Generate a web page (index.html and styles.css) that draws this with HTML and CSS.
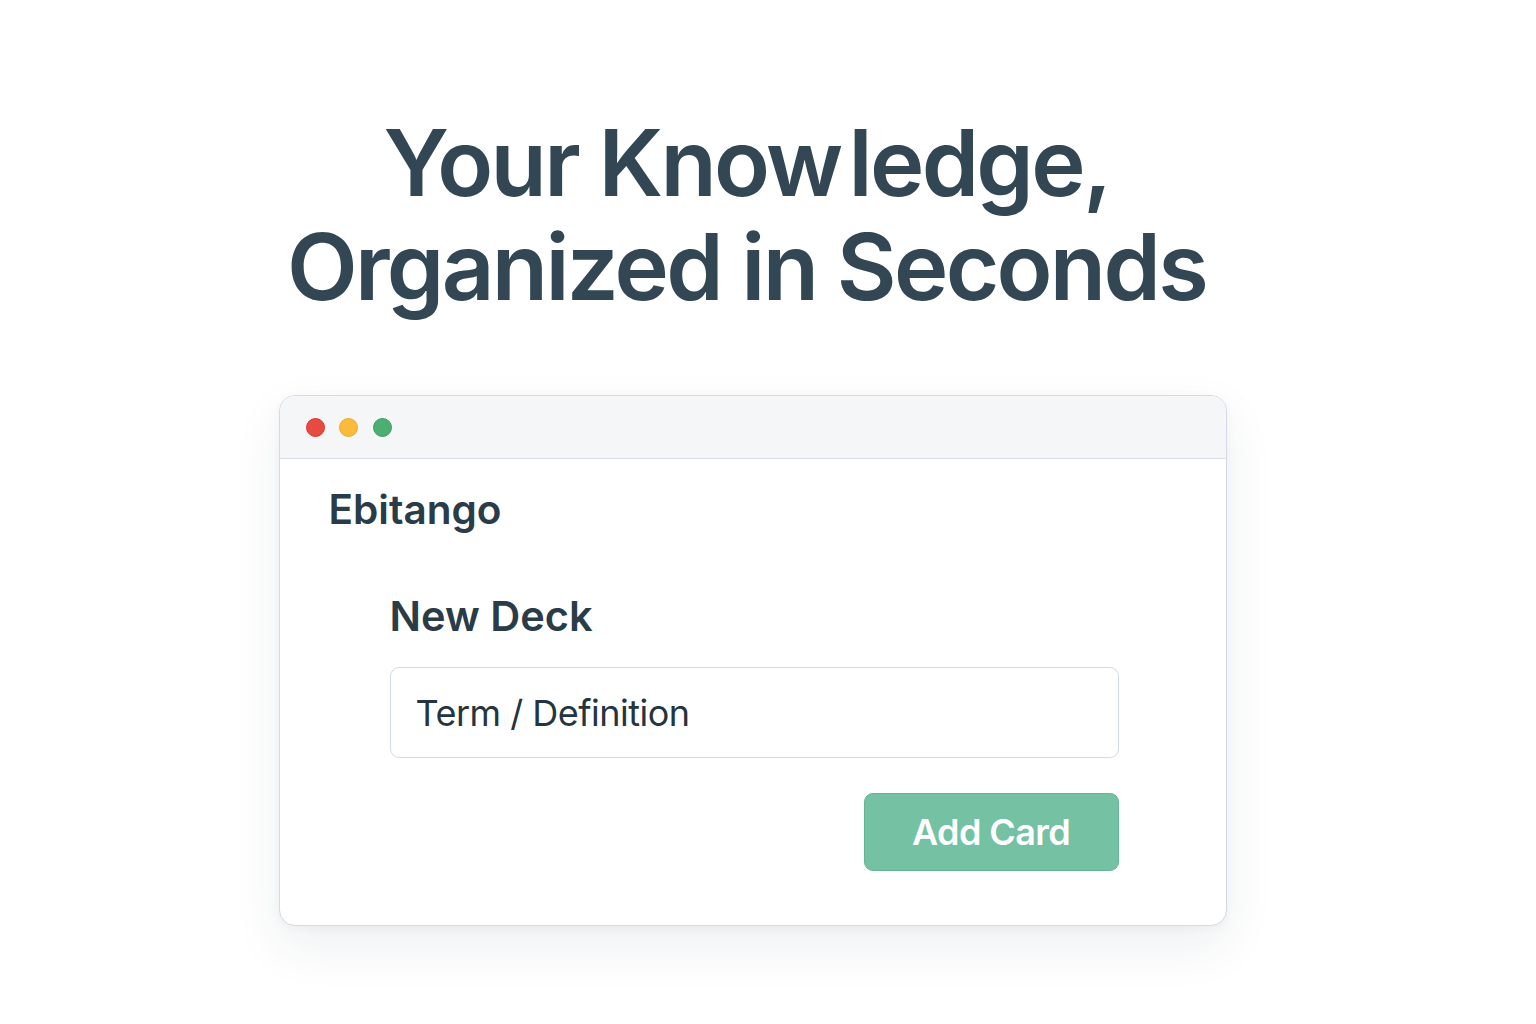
FILE: index.html
```html
<!DOCTYPE html>
<html lang="en">
<head>
<meta charset="utf-8">
<title>Ebitango</title>
<link rel="stylesheet" href="styles.css">
</head>
<body>
<main class="page">
  <h1 class="headline">Your <span class="kern">Know</span>ledge,<br>Organized in Seconds</h1>
  <section class="window">
    <header class="window-bar">
      <span class="dot dot-red"></span>
      <span class="dot dot-yellow"></span>
      <span class="dot dot-green"></span>
    </header>
    <div class="window-body">
      <div class="brand">Ebitango</div>
      <div class="form">
        <h2 class="form-title">New Deck</h2>
        <div class="input">Term / Definition</div>
        <div class="actions">
          <button class="btn">Add Card</button>
        </div>
      </div>
    </div>
  </section>
</main>
</body>
</html>
```
FILE: styles.css
```css
html, body {
  margin: 0;
  padding: 0;
  background: #ffffff;
}
body {
  font-family: Inter, "Noto Sans", sans-serif;
  color: #2c3e4a;
}
.page {
  display: flex;
  flex-direction: column;
  align-items: center;
  padding: 111px 31px 98px 0;
}
.headline {
  margin: 0;
  padding-right: 12px;
  font-size: 92px;
  line-height: 104px;
  font-weight: 560;
  letter-spacing: -2.7px;
  text-align: center;
  color: #324753;
}
.kern {
  margin-right: 8px;
}
.window {
  margin-top: 76px;
  width: 948px;
  box-sizing: border-box;
  border: 1px solid #d4dbe6;
  border-radius: 16px;
  background: #ffffff;
  box-shadow: 0 20px 50px rgba(30, 45, 70, 0.08), 0 2px 8px rgba(30, 45, 70, 0.04);
  overflow: hidden;
}
.window-bar {
  height: 63px;
  background: #f4f6f8;
  border-bottom: 1px solid #d8dfe8;
  display: flex;
  align-items: center;
  gap: 14.5px;
  padding-left: 26px;
  box-sizing: border-box;
}
.dot {
  width: 19px;
  height: 19px;
  border-radius: 50%;
  box-sizing: border-box;
}
.dot-red { background: #e64a40; border: 1px solid #d9362d; }
.dot-yellow { background: #fbbb3a; border: 1px solid #f0a923; }
.dot-green { background: #4caf72; border: 1px solid #3a9f60; }
.window-body {
  padding: 27px 107px 54px 49px;
}
.brand {
  font-size: 40.5px;
  line-height: 48px;
  font-weight: 600;
  letter-spacing: 0;
  color: #2a3c48;
}
.form {
  margin-left: 61px;
  padding-top: 58px;
}
.form-title {
  margin: 0;
  font-size: 41.5px;
  line-height: 48px;
  font-weight: 600;
  letter-spacing: 0;
  color: #2a3c48;
}
.input {
  margin-top: 27px;
  height: 91px;
  box-sizing: border-box;
  border: 1px solid #d3dae3;
  border-radius: 9px;
  padding-left: 25px;
  display: flex;
  align-items: center;
  font-size: 36px;
  font-weight: 400;
  letter-spacing: -0.5px;
  color: #25353f;
}
.actions {
  display: flex;
  justify-content: flex-end;
  margin-top: 35px;
}
.btn {
  width: 255px;
  height: 78px;
  box-sizing: border-box;
  border: 1px solid #62b792;
  border-radius: 9px;
  background: #75c1a3;
  color: #ffffff;
  font-family: Inter, "Noto Sans", sans-serif;
  font-size: 36px;
  font-weight: 600;
  letter-spacing: -0.6px;
  padding: 0;
}
```
